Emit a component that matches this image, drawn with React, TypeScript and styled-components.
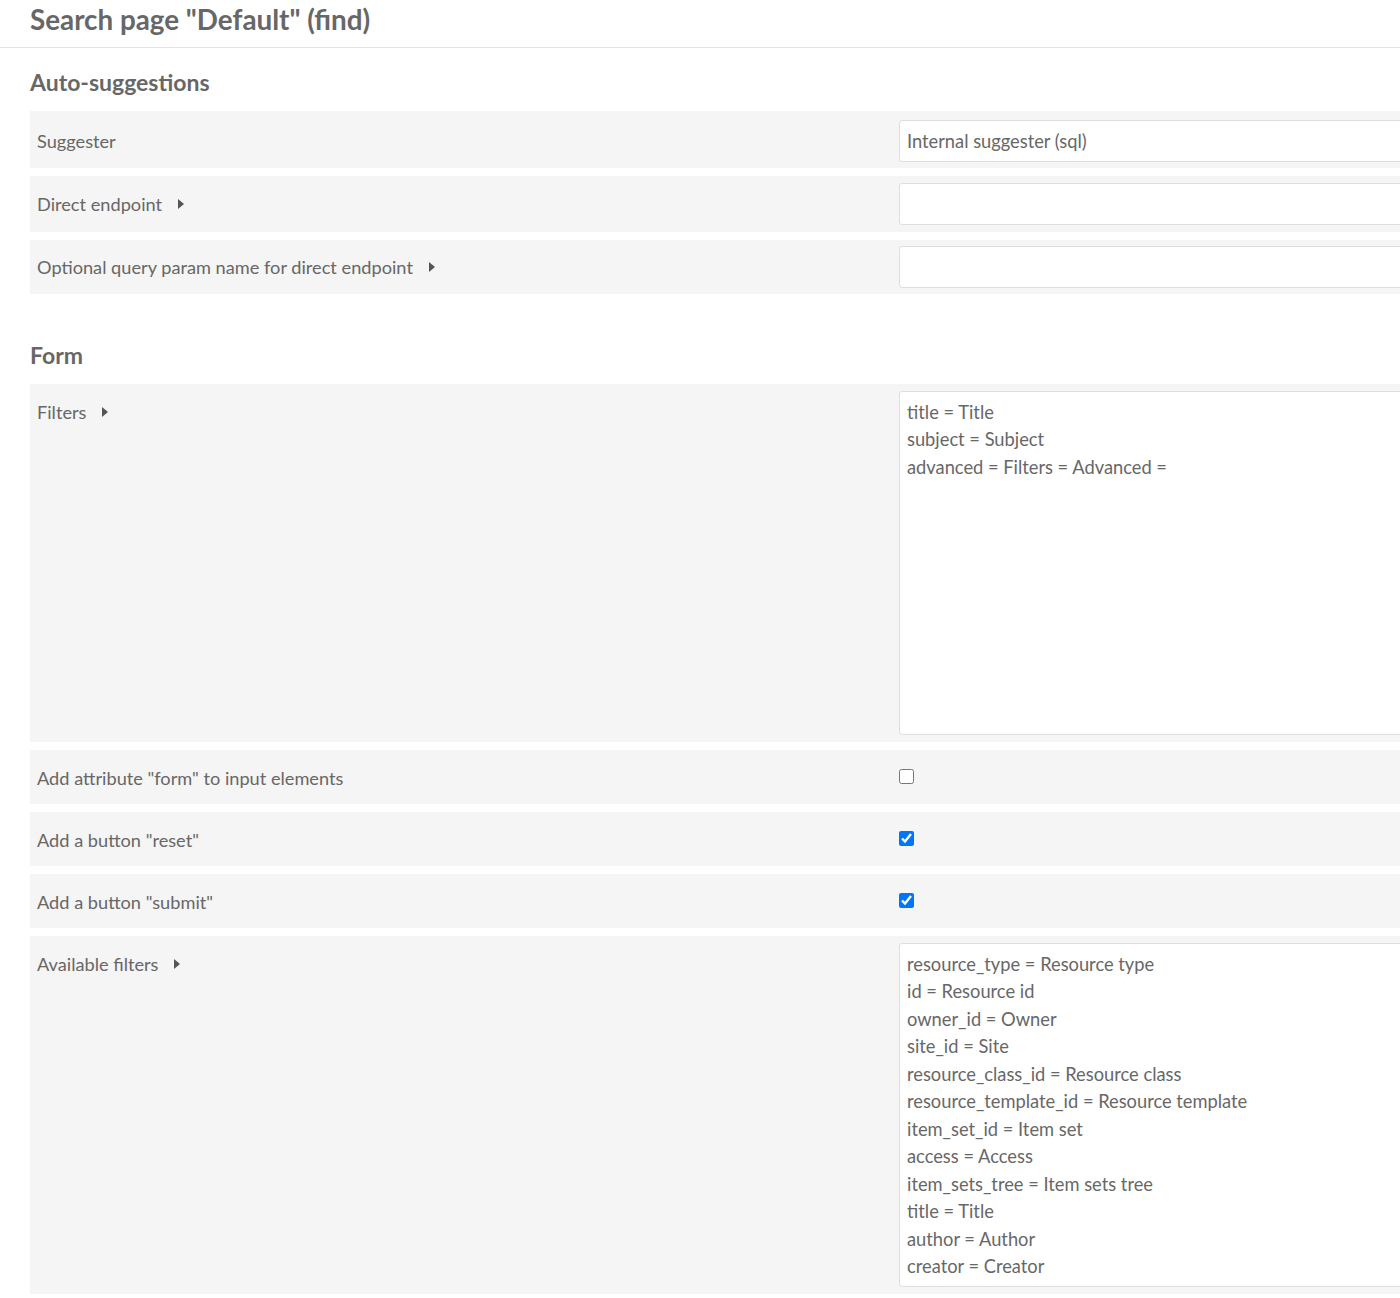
import React from "react";
import styled, { createGlobalStyle } from "styled-components";

const Global = createGlobalStyle`
  html, body { margin: 0; padding: 0; overflow: hidden; background: #fff; }
  body { font-family: Lato, "Noto Sans", sans-serif; color: #676767; }
  * { box-sizing: border-box; }
`;

const Page = styled.div`
  width: 1560px;
`;

const Header = styled.header`
  height: 48px;
  border-bottom: 1px solid #e3e3e3;
  padding-left: 30px;
  display: flex;
  align-items: center;
`;

const Title = styled.h1`
  margin: 0;
  font-size: 27.8px;
  font-weight: 700;
  line-height: 1;
  margin-top: -7px;
`;

const Content = styled.div`
  padding-left: 30px;
`;

const Section = styled.section<{ $top: number }>`
  padding-top: ${(p) => p.$top}px;
`;

const SectionTitle = styled.h2`
  margin: 0 0 2px;
  font-size: 23px;
  font-weight: 700;
  line-height: 48px;
  height: 51px;
`;

const Rows = styled.div`
  display: flex;
  flex-direction: column;
  gap: 8px;
`;

const Row = styled.div<{ $top?: number; $bottom?: number }>`
  display: grid;
  grid-template-columns: 869px 1fr;
  background: #f5f5f5;
  padding-top: ${(p) => p.$top ?? 7}px;
  padding-bottom: ${(p) => p.$bottom ?? 7}px;
`;

const Label = styled.div`
  padding-left: 7px;
  font-size: 18.2px;
  line-height: 42px;
  height: 42px;
  display: flex;
  align-items: center;
  gap: 16px;
`;

const Arrow = styled.span`
  width: 0;
  height: 0;
  border-top: 5px solid transparent;
  border-bottom: 5px solid transparent;
  border-left: 6px solid #555;
`;

const Input = styled.div`
  height: 42px;
  background: #fff;
  border: 1px solid #dedede;
  border-radius: 3px 0 0 3px;
  padding: 0 7px;
  font-size: 18.3px;
  line-height: 40px;
  white-space: nowrap;
`;

const TextArea = styled.div`
  height: 344px;
  background: #fff;
  border: 1px solid #dedede;
  border-radius: 3px 0 0 3px;
  padding: 7px 7px;
  font-size: 18.3px;
  line-height: 27.45px;
  white-space: pre;
  overflow: hidden;
`;

const CheckCell = styled.div`
  height: 38px;
  display: flex;
  align-items: center;
`;

const Check = styled.input`
  margin: 0;
  width: 15px;
  height: 15px;
  accent-color: #0075ff;
`;

const filters = ["title = Title", "subject = Subject", "advanced = Filters = Advanced ="];
const available = [
  "resource_type = Resource type",
  "id = Resource id",
  "owner_id = Owner",
  "site_id = Site",
  "resource_class_id = Resource class",
  "resource_template_id = Resource template",
  "item_set_id = Item set",
  "access = Access",
  "item_sets_tree = Item sets tree",
  "title = Title",
  "author = Author",
  "creator = Creator",
];

const LabelText = ({ text, arrow }: { text: string; arrow?: boolean }) => (
  <Label>
    <span>{text}</span>
    {arrow && <Arrow />}
  </Label>
);

const CheckRow = ({ text, checked }: { text: string; checked: boolean }) => (
  <Row $bottom={5}>
    <LabelText text={text} />
    <CheckCell>
      <Check type="checkbox" defaultChecked={checked} />
    </CheckCell>
  </Row>
);

export default function App() {
  return (
    <Page>
      <Global />
      <Header>
        <Title>Search page "Default" (find)</Title>
      </Header>
      <Content>
        <Section $top={10}>
          <SectionTitle>Auto-suggestions</SectionTitle>
          <Rows>
            <Row $top={9} $bottom={6}>
              <LabelText text="Suggester" />
              <Input>Internal suggester (sql)</Input>
            </Row>
            <Row>
              <LabelText text="Direct endpoint" arrow />
              <Input />
            </Row>
            <Row $top={6} $bottom={6}>
              <LabelText text="Optional query param name for direct endpoint" arrow />
              <Input />
            </Row>
          </Rows>
        </Section>
        <Section $top={37}>
          <SectionTitle>Form</SectionTitle>
          <Rows>
            <Row>
              <LabelText text="Filters" arrow />
              <TextArea>{filters.join("\n")}</TextArea>
            </Row>
            <CheckRow text={'Add attribute "form" to input elements'} checked={false} />
            <CheckRow text={'Add a button "reset"'} checked />
            <CheckRow text={'Add a button "submit"'} checked />
            <Row>
              <LabelText text="Available filters" arrow />
              <TextArea>{available.join("\n")}</TextArea>
            </Row>
          </Rows>
        </Section>
      </Content>
    </Page>
  );
}
